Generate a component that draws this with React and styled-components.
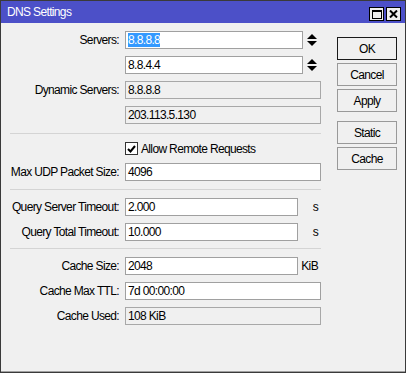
import styled, { createGlobalStyle } from 'styled-components';

const GlobalStyle = createGlobalStyle`
  html, body {
    margin: 0;
    padding: 0;
    background: #f0f0f0;
  }
  body {
    font-family: "Liberation Sans", Arial, sans-serif;
    font-size: 12px;
    letter-spacing: -0.65px;
    color: #000;
  }
`;

const Window = styled.div`
  width: 406px;
  height: 373px;
  box-sizing: border-box;
  border: 1px solid #3a3a3a;
  display: flex;
  flex-direction: column;
  background: #f0f0f0;
`;
const TitleBar = styled.div`
  height: 22px;
  flex-shrink: 0;
  display: flex;
  padding: 0 4px 0 6px;
  background: #4c50c8;
  color: #fff;
`;
const TitleText = styled.div`
  flex: 1;
  align-self: center;
  font-size: 12px;
`;
const TitleButtons = styled.div`
  display: flex;
  gap: 2px;
  align-self: flex-end;
  margin-bottom: 2px;
`;
const TitleButton = styled.div`
  width: 15px;
  height: 14px;
  box-sizing: border-box;
  border: 1px solid #000;
  background: #f0f0f0;
  display: flex;
  align-items: center;
  justify-content: center;
`;
const Body = styled.div`
  flex: 1;
  display: flex;
  align-items: flex-start;
  gap: 16px;
  padding: 8px 8px 0 9px;
  border-bottom: 1px solid #a0a0a0;
`;
const Form = styled.div`
  width: 311px;
  display: flex;
  flex-direction: column;
`;
const Section = styled.div`
  display: flex;
  flex-direction: column;
  gap: 7px;
`;
const Divider = styled.div`
  border-top: 1px solid #d4d4d4;
  margin: ${(p) => p.$mt}px 0 ${(p) => p.$mb}px;
`;
const Row = styled.div`
  display: flex;
  align-items: center;
  height: ${(p) => p.$h || 18}px;
`;
const Label = styled.div`
  width: 109px;
  flex: none;
  margin-right: 6px;
  text-align: right;
  white-space: nowrap;
`;
const Field = styled.div`
  width: ${(p) => p.$w || 196}px;
  height: 18px;
  flex: none;
  box-sizing: border-box;
  border: 1px solid ${(p) => (p.$readOnly ? '#a8a8a8' : '#a0a0a0')};
  background: ${(p) => (p.$readOnly ? '#f0f0f0' : '#fff')};
  padding: 0 2px;
  line-height: 16px;
  white-space: nowrap;
  overflow: hidden;
`;
const Selected = styled.span`
  background: #3399ff;
  color: #fff;
`;
const Unit = styled.div`
  width: 20px;
  text-align: right;
`;
const CheckBox = styled.div`
  width: 13px;
  height: 13px;
  box-sizing: border-box;
  border: 1px solid #333;
  background: #fff;
  display: flex;
  align-items: center;
  justify-content: center;
`;
const CheckText = styled.div`
  margin-left: 3px;
`;
const ButtonColumn = styled.div`
  width: 60px;
  display: flex;
  flex-direction: column;
  gap: 3px;
  padding-top: 6px;
`;
const Button = styled.button`
  height: 23px;
  margin-top: ${(p) => p.$mt || 0}px;
  padding: 0;
  box-sizing: border-box;
  border: 1px solid ${(p) => (p.$default ? '#1a1a1a' : '#999')};
  background: #f0f0f0;
  font: inherit;
  letter-spacing: inherit;
  color: #000;
`;

const Spinner = () => (
  <svg width="10" height="14" viewBox="0 0 10 14" style={{ marginLeft: 4 }}>
    <path d="M5 1 L10 6 L0 6 Z" fill="#000" />
    <path d="M0 8 L10 8 L5 13 Z" fill="#000" />
  </svg>
);

export default function App() {
  return (
    <>
      <GlobalStyle />
      <Window>
        <TitleBar>
          <TitleText>DNS Settings</TitleText>
          <TitleButtons>
            <TitleButton>
              <svg width="10" height="9" viewBox="0 0 10 9">
                <rect x="0.5" y="0.5" width="9" height="8" fill="none" stroke="#000" />
                <rect x="0" y="0" width="10" height="2" fill="#000" />
              </svg>
            </TitleButton>
            <TitleButton>
              <svg width="9" height="8" viewBox="0 0 9 8">
                <path d="M1 0.5 L8 7.5 M8 0.5 L1 7.5" stroke="#000" strokeWidth="2" />
              </svg>
            </TitleButton>
          </TitleButtons>
        </TitleBar>
        <Body>
          <Form>
            <Section>
              <Row>
                <Label>Servers:</Label>
                <Field $w={178}>
                  <Selected>8.8.8.8</Selected>
                </Field>
                <Spinner />
              </Row>
              <Row>
                <Label />
                <Field $w={178}>8.8.4.4</Field>
                <Spinner />
              </Row>
              <Row>
                <Label>Dynamic Servers:</Label>
                <Field $readOnly>8.8.8.8</Field>
              </Row>
              <Row>
                <Label />
                <Field $readOnly>203.113.5.130</Field>
              </Row>
            </Section>
            <Divider $mt={9} $mb={7} />
            <Section>
              <Row $h={15}>
                <Label />
                <CheckBox>
                  <svg width="9" height="8" viewBox="0 0 9 8">
                    <path d="M1 4 L3.5 6.5 L8 1" fill="none" stroke="#000" strokeWidth="2" />
                  </svg>
                </CheckBox>
                <CheckText>Allow Remote Requests</CheckText>
              </Row>
              <Row>
                <Label>Max UDP Packet Size:</Label>
                <Field>4096</Field>
              </Row>
            </Section>
            <Divider $mt={8} $mb={8} />
            <Section>
              <Row>
                <Label>Query Server Timeout:</Label>
                <Field $w={173}>2.000</Field>
                <Unit>s</Unit>
              </Row>
              <Row>
                <Label>Query Total Timeout:</Label>
                <Field $w={173}>10.000</Field>
                <Unit>s</Unit>
              </Row>
            </Section>
            <Divider $mt={7} $mb={8} />
            <Section>
              <Row>
                <Label>Cache Size:</Label>
                <Field $w={173}>2048</Field>
                <Unit>KiB</Unit>
              </Row>
              <Row>
                <Label>Cache Max TTL:</Label>
                <Field>7d 00:00:00</Field>
              </Row>
              <Row>
                <Label>Cache Used:</Label>
                <Field $readOnly>108 KiB</Field>
              </Row>
            </Section>
          </Form>
          <ButtonColumn>
            <Button $default>OK</Button>
            <Button>Cancel</Button>
            <Button>Apply</Button>
            <Button $mt={6}>Static</Button>
            <Button>Cache</Button>
          </ButtonColumn>
        </Body>
      </Window>
    </>
  );
}
